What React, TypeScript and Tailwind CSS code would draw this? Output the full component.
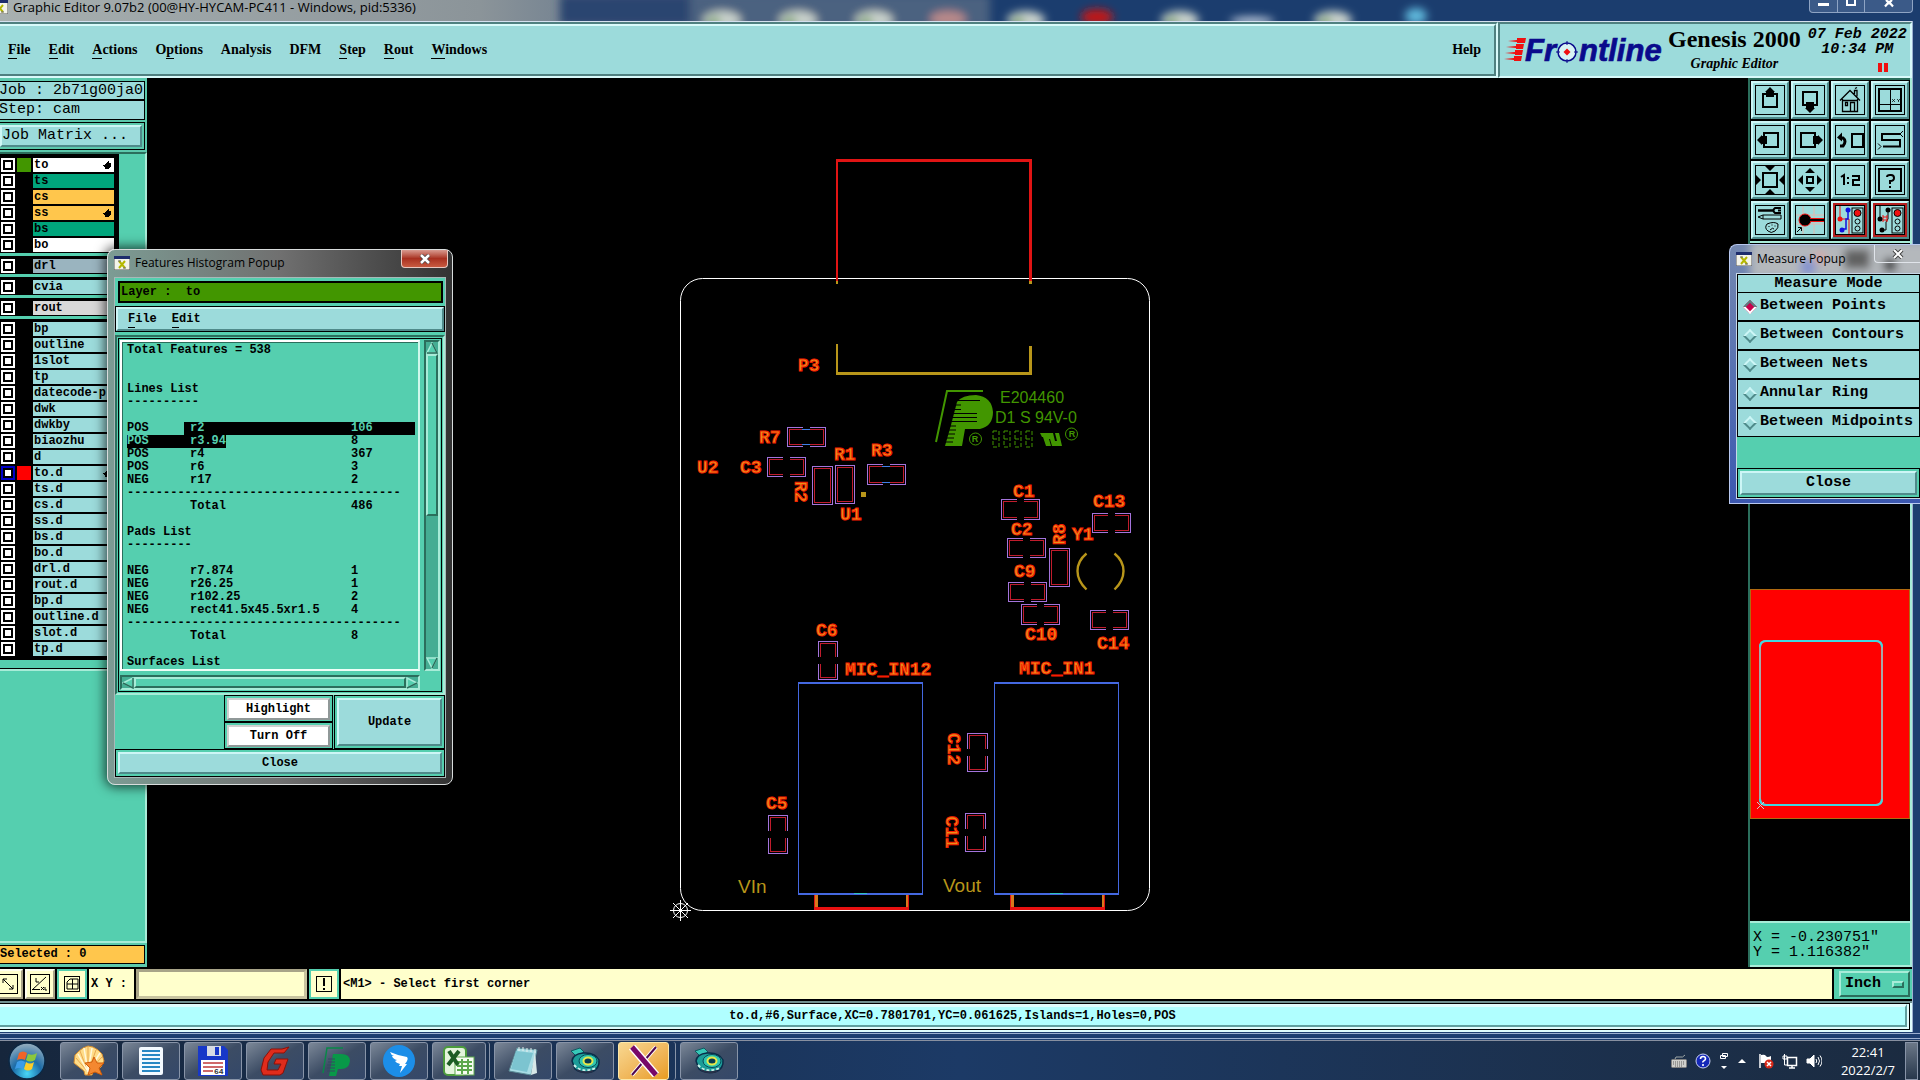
import { useState, type ReactNode } from "react";

const RAISED =
  "border-2 border-t-[#cdf6f6] border-l-[#cdf6f6] border-r-[#4f8a8a] border-b-[#4f8a8a]";
const GREEN_RAISED =
  "border-2 border-t-[#a8ecd8] border-l-[#a8ecd8] border-r-[#2b6e5c] border-b-[#2b6e5c]";
const GREEN_SUNKEN =
  "border-2 border-t-[#2b6e5c] border-l-[#2b6e5c] border-r-[#a8ecd8] border-b-[#a8ecd8]";
const MONO = "font-['Liberation_Mono',monospace]";
const SERIF = "font-['Liberation_Serif',serif]";
const SANS = "font-['Open_Sans',sans-serif]";

type Layer = { name: string; bg?: string; swatch?: string; hand?: boolean; active?: boolean };

const LAYER_GROUPS: Layer[][] = [
  [
    { name: "to", bg: "bg-white", swatch: "bg-[#429600]", hand: true },
    { name: "ts", bg: "bg-[#00a57c]" },
    { name: "cs", bg: "bg-[#ffc64c]" },
    { name: "ss", bg: "bg-[#ffc64c]", hand: true },
    { name: "bs", bg: "bg-[#00a57c]" },
    { name: "bo", bg: "bg-white" },
  ],
  [{ name: "drl", bg: "bg-[#9ab4bf]" }],
  [{ name: "cvia" }],
  [{ name: "rout", bg: "bg-[#d8d8d8]" }],
  [
    { name: "bp" },
    { name: "outline" },
    { name: "1slot" },
    { name: "tp" },
    { name: "datecode-p" },
    { name: "dwk" },
    { name: "dwkby" },
    { name: "biaozhu" },
    { name: "d" },
    { name: "to.d", swatch: "bg-[#ff0000]", hand: true, active: true },
    { name: "ts.d" },
    { name: "cs.d" },
    { name: "ss.d" },
    { name: "bs.d" },
    { name: "bo.d" },
    { name: "drl.d" },
    { name: "rout.d" },
    { name: "bp.d" },
    { name: "outline.d" },
    { name: "slot.d" },
    { name: "tp.d" },
  ],
];

// label, index of the underlined mnemonic (-1 for none)
const MENUS: [string, number][] = [
  ["File", 0],
  ["Edit", 0],
  ["Actions", 0],
  ["Options", 1],
  ["Analysis", -1],
  ["DFM", -1],
  ["Step", 0],
  ["Rout", 0],
  ["Windows", 0],
];

function MenuLabel({ text, at }: { text: string; at: number }) {
  if (at < 0) return <>{text}</>;
  return (
    <>
      {text.slice(0, at)}
      <span className="border-b border-black pb-px">{text[at]}</span>
      {text.slice(at + 1)}
    </>
  );
}

function XLogo({ className }: { className?: string }) {
  return (
    <svg viewBox="0 0 16 14" className={className} aria-hidden>
      <rect x="0" y="0" width="16" height="14" fill="#f4f4ea" stroke="#555" />
      <rect x="0" y="0" width="16" height="3" fill="#1d2c6c" />
      <path d="M5 5 L11 12 M11 5 L5 12" stroke="#b5b800" strokeWidth="2" />
      <path d="M4 5h3M9 12h3" stroke="#666" strokeWidth="1" />
    </svg>
  );
}

function TitleBar() {
  return (
    <div className="relative flex h-[21px] shrink-0 items-start justify-between overflow-hidden bg-[#1b3d6e]">
      <div className="absolute inset-0 bg-gradient-to-r from-[#a8b0b0] from-0% via-[#8b9499] via-25% to-[#1b3d6e] to-50%" />
      <svg className="absolute inset-0 h-full w-full" aria-hidden>
        <defs>
          <filter id="glass" x="-50%" y="-50%" width="200%" height="200%">
            <feGaussianBlur stdDeviation="4" />
          </filter>
        </defs>
        <g filter="url(#glass)">
          <rect x="560" y="-6" width="130" height="32" fill="#2a4470" />
          <rect x="690" y="-6" width="300" height="34" fill="#4b6280" />
          {[722, 798, 874, 1026, 1180, 1333].map((x) => (
            <g key={x}>
              <ellipse cx={x} cy="20" rx="19" ry="9" fill="#c9d2cc" />
              <ellipse cx={x - 8} cy="22" rx="7" ry="6" fill="#8fae85" />
            </g>
          ))}
          <ellipse cx="948" cy="19" rx="18" ry="8" fill="#b98a8a" />
          <ellipse cx="1097" cy="17" rx="16" ry="8" fill="#c01818" />
          <ellipse cx="1252" cy="21" rx="22" ry="4" fill="#c5d0e0" />
          <ellipse cx="1416" cy="16" rx="11" ry="8" fill="#5fb8dc" />
        </g>
      </svg>
      <div className={`relative flex items-center gap-[5px] text-[13px] leading-[14px] text-black ${SANS}`}>
        <XLogo className="-ml-2 h-[14px] w-4" />
        <h1 className="whitespace-nowrap">Graphic Editor 9.07b2 (00@HY-HYCAM-PC411 - Windows, pid:5336)</h1>
      </div>
      <div className="relative mr-[7px] flex h-[13px] overflow-hidden rounded-b border border-t-0 border-[#8ea4c4] bg-[#3b5a88]">
        <button aria-label="Minimize" className="flex w-[28px] items-start justify-center border-r border-[#8ea4c4] pt-[3px]">
          <span className="h-[3px] w-[11px] bg-white" />
        </button>
        <button aria-label="Maximize" className="flex w-[27px] items-start justify-center border-r border-[#8ea4c4]">
          <span className="h-[6px] w-[10px] border-2 border-t-0 border-white" />
        </button>
        <button aria-label="Close window" className="flex w-[47px] items-start justify-center">
          <svg viewBox="0 0 12 8" className="h-2 w-3" aria-hidden>
            <path d="M3 0 L6 3 L9 0 M2 6.500 L6 2 L10 6.500" stroke="#fff" strokeWidth="2.200" fill="none" />
          </svg>
        </button>
      </div>
    </div>
  );
}

function FrontlineLogo() {
  return (
    <svg viewBox="0 0 162 32" className="h-8 w-[162px] shrink-0 overflow-visible" role="img" aria-label="Frontline">
      <g fill="#f01010">
        <path d="M4 3 L13 2 L13 0 L22 0 L21 5 L13 5 L13 4Z" />
        <path d="M2 9 L12 8 L12 6 L20 6 L19 11 L12 11 L12 10Z" />
        <path d="M1 15 L11 14 L11 12 L19 12 L18 17 L11 17 L11 16Z" />
        <path d="M0 21 L10 20 L10 18 L18 18 L17 23 L10 23 L10 22Z" />
      </g>
      <g
        fill="#0a0a8c"
        stroke="#0a0a8c"
        strokeWidth="0.700"
        fontFamily="Liberation Sans"
        fontWeight="bold"
        fontStyle="italic"
        fontSize="31"
      >
        <text x="21" y="23">Fr</text>
        <text x="75" y="23">ntline</text>
      </g>
      <circle cx="63" cy="14" r="9" fill="#d8f4f4" stroke="#0a0a8c" strokeWidth="1.500" />
      <path d="M63 10.500L66.500 14L63 17.500L59.500 14Z" fill="#f01010" />
      <path d="M63 3v4M63 21v4M52 14h4M70 14h4" stroke="#0a0a8c" strokeWidth="1" />
    </svg>
  );
}

function Header() {
  return (
    <header className="flex h-[57px] shrink-0 border-t border-[#d5e0ee] bg-[#9cdbdb]">
      <div className="flex-1 border-2 border-l-0 border-t-[#4f8080] border-r-[#d8fafa] border-b-[#d8fafa]">
        <nav
          className={`flex h-full items-center gap-[18px] border-2 border-l-0 border-t-[#d8fafa] border-r-[#4f8080] border-b-[#4f8080] pl-2 pr-[13px] text-[14px] font-bold leading-[16px] ${SERIF}`}
        >
          {MENUS.map(([text, at]) => (
            <button key={text}>
              <MenuLabel text={text} at={at} />
            </button>
          ))}
          <button className="ml-auto">Help</button>
        </nav>
      </div>
      <div className="flex w-[414px] items-start gap-[2px] border-2 border-t-[#4f8080] border-l-[#4f8080] border-r-[#d8fafa] border-b-[#d8fafa] pl-1">
        <div className="pt-[14px]">
          <FrontlineLogo />
        </div>
        <div className={`flex flex-col items-center font-bold ${SERIF}`}>
          <span className="whitespace-nowrap text-[24px] leading-[30px]">Genesis 2000</span>
          <span className="text-[14px] italic leading-[20px]">Graphic Editor</span>
        </div>
        <div className={`flex flex-1 flex-col items-center pt-[3px] pl-[2px] text-[15px] italic leading-[15px] ${MONO}`}>
          <span className="whitespace-nowrap font-bold">07 Feb 2022</span>
          <span className="font-bold">10:34 PM</span>
          <span className="mt-[6px] mr-[22px] flex gap-[2px] self-end">
            <i className="h-[9px] w-1 bg-[#f01010]" />
            <i className="h-[9px] w-1 bg-[#f01010]" />
          </span>
        </div>
      </div>
    </header>
  );
}

function Hand() {
  return (
    <svg viewBox="0 0 9 8" className="h-2 w-[9px]" aria-hidden>
      <path d="M5 0h1v2h2v4h-1v1h-1v1h-4v-2h-1v-1h-1v-1h2v-1h1v-1h1v-1h1z" fill="#000" />
    </svg>
  );
}

function LayerRow({ layer }: { layer: Layer }) {
  return (
    <div className="flex h-4 items-center">
      <input
        type="checkbox"
        aria-label={`Affect layer ${layer.name}`}
        className={`ml-px h-[14px] w-[14px] shrink-0 appearance-none border-2 bg-white ${
          layer.active ? "border-[#0000c8]" : "border-white"
        } shadow-[inset_0_0_0_2px_#000]`}
      />
      <span className={`mx-[2px] h-[14px] w-[14px] shrink-0 ${layer.swatch ?? "bg-black"}`} />
      <button className={`flex h-[14px] flex-1 items-center justify-between pl-px pr-[2px] leading-[14px] ${layer.bg ?? "bg-[#9cdbdb]"}`}>
        {layer.name}
        {layer.hand && <Hand />}
      </button>
    </div>
  );
}

function Sidebar() {
  return (
    <aside className={`flex w-[147px] shrink-0 flex-col bg-[#5cc9ad] text-[12px] font-bold ${MONO}`}>
      <div className="mt-[3px] mr-[2px] border border-l-0 border-black text-[15px] font-normal">
        <div className="h-[19px] overflow-hidden whitespace-nowrap border-b-2 border-black bg-[#9cdbdb] leading-[17px] -indent-px">
          Job : 2b71g00ja0
        </div>
        <div className="bg-[#9cdbdb] leading-[18px] -indent-px">Step: cam</div>
      </div>
      <div className="mt-[2px] mr-[2px] border border-l-0 border-black pt-[2px] pr-[2px] pb-[2px] text-[15px] font-normal">
        <button className={`block w-full bg-[#9cdbdb] text-left leading-[18px] ${RAISED}`}>Job Matrix ...</button>
      </div>
      <div className="mt-[2px] flex min-h-0 flex-1 flex-col border-t-2 border-[#2b6e5c] border-r-2 border-r-[#a8ecd8] bg-[#55cfaf]">
        <div className="w-[119px] border-b-2 border-r-2 border-t border-black bg-black pb-px pr-[3px]">
          {LAYER_GROUPS.map((group, i) => (
            <div key={i} className={i > 0 ? "border-t-[3px] border-[#55cfaf] pt-[2px]" : "pt-[2px]"}>
              {group.map((layer) => (
                <LayerRow key={layer.name} layer={layer} />
              ))}
            </div>
          ))}
        </div>
        <div className="mt-2 border-t border-black">
          <div className="h-[2px] bg-[#a8ecd8]" />
        </div>
      </div>
      <div className="border-t-2 border-[#a8ecd8] pt-[2px] pr-[2px] pb-[3px]">
        <div className="border border-l-0 border-black bg-[#ffc64c] leading-[17px]">Selected : 0</div>
      </div>
    </aside>
  );
}

type Pad = [x: number, y: number, w: number, h: number, gap: "x" | "y" | "none" | "tick"];

const PADS: Pad[] = [
  [787, 427, 38, 19, "tick"],
  [767, 457, 38, 19, "x"],
  [867, 464, 38, 20, "tick"],
  [812, 466, 20, 38, "none"],
  [835, 465, 19, 38, "none"],
  [1001, 499, 38, 20, "x"],
  [1007, 538, 38, 19, "x"],
  [1092, 513, 38, 19, "x"],
  [1049, 548, 20, 38, "none"],
  [1008, 582, 38, 19, "x"],
  [1021, 604, 38, 20, "x"],
  [1090, 610, 38, 19, "x"],
  [818, 641, 19, 38, "y"],
  [967, 733, 20, 38, "y"],
  [965, 813, 20, 38, "y"],
  [768, 815, 19, 38, "y"],
];

const LABELS: [text: string, x: number, y: number, rot?: number][] = [
  ["P3", 798, 371],
  ["R7", 759, 443],
  ["C3", 740, 473],
  ["U2", 697, 473],
  ["R1", 834, 460],
  ["R3", 871, 456],
  ["R2", 795, 481, 90],
  ["U1", 840, 520],
  ["C1", 1013, 497],
  ["C2", 1011, 535],
  ["C9", 1014, 577],
  ["C13", 1093, 507],
  ["Y1", 1072, 540],
  ["R8", 1065, 545, -90],
  ["C10", 1025, 640],
  ["C14", 1097, 649],
  ["C6", 816, 636],
  ["MIC_IN12", 845, 675],
  ["MIC_IN1", 1019, 674],
  ["C12", 948, 733, 90],
  ["C11", 946, 816, 90],
  ["C5", 766, 809],
];

function PadShape({ pad: [x, y, w, h, gap] }: { pad: Pad }) {
  const cx = x + w / 2;
  const cy = y + h / 2;
  return (
    <g fill="none" shapeRendering="crispEdges">
      <rect x={x + 0.5} y={y + 0.5} width={w} height={h} stroke="#a474dc" />
      <rect x={x + 2.5} y={y + 2.5} width={w - 4} height={h - 4} stroke="#c01c2c" />
      {(gap === "x" || gap === "tick") && <path d={`M${cx} ${y - 1}V${y + h + 2}`} stroke="#000" strokeWidth="7" />}
      {gap === "y" && <path d={`M${x - 1} ${cy}H${x + w + 2}`} stroke="#000" strokeWidth="7" />}
      {gap === "tick" && <path d={`M${cx - 4} ${y + 2.5}h8M${cx - 4} ${y + h - 1.5}h8`} stroke="#3f7fe8" />}
    </g>
  );
}

function Board() {
  return (
    <svg viewBox="147 78 1601 889" className="h-full w-full" role="img" aria-label="PCB layout">
      <g fill="none" strokeWidth="1" stroke="#fff">
        <rect x="680.500" y="278.500" width="469" height="632" rx="22" />
        <circle cx="680.500" cy="910.500" r="7" />
        <path d="M670 910.500h21M680.500 900v21M673 903l15 15M688 903l-15 15" />
      </g>

      <g fill="none" shapeRendering="crispEdges">
        <path d="M837 281V160" stroke="#e01414" strokeWidth="2" />
        <path d="M836 160.500H1032M1030.500 281V160" stroke="#e01414" strokeWidth="3" />
        <path d="M836 282.500h2M1029 282.500h3" stroke="#b8961a" strokeWidth="3" />
        <path d="M837 344V373" stroke="#b8961a" strokeWidth="2" />
        <path d="M836 373.500H1032M1030.500 346V374" stroke="#b8961a" strokeWidth="3" />
        <rect x="861" y="492" width="5" height="5" fill="#b8961a" />
      </g>
      <g fill="none" stroke="#b8961a" strokeWidth="2.400">
        <path d="M1086.500 553.500Q1077.500 561 1077.500 571T1086.500 589.500" />
        <path d="M1114.500 553.500Q1123.500 561 1123.500 571T1114.500 589.500" />
      </g>

      {[798, 994].map((x) => (
        <g key={x} fill="none" shapeRendering="crispEdges">
          <rect x={x + 0.5} y="682.500" width="124" height="211" stroke="#4468e0" />
          <path d={`M${x} 683h125M${x} 894h125`} stroke="#4468e0" strokeWidth="2" />
          <path d={`M${x + 56} 893.500h13`} stroke="#30c0c0" />
          <path d={`M${x + 18} 895v13M${x + 109} 895v13`} stroke="#d8781c" strokeWidth="3" />
          <path d={`M${x + 16.5} 895v13M${x + 110.500} 895v13`} stroke="#e01414" />
          <path d={`M${x + 16} 908.500h95`} stroke="#e81010" strokeWidth="3" />
        </g>
      ))}

      {PADS.map((pad) => (
        <PadShape key={`${pad[0]}-${pad[1]}`} pad={pad} />
      ))}

      <g
        fontFamily="Liberation Mono"
        fontWeight="bold"
        fontSize="18"
        fill="#e89018"
        stroke="#f81c00"
        strokeWidth="1"
      >
        {LABELS.map(([text, x, y, rot]) => (
          <text key={text} x={x} y={y} transform={rot ? `rotate(${rot} ${x} ${y})` : undefined}>
            {text}
          </text>
        ))}
      </g>

      <g fontFamily="Liberation Sans" fontSize="19" fill="#b8961a">
        <text x="738" y="893">VIn</text>
        <text x="943" y="892">Vout</text>
      </g>

      {/* UL marking */}
      <g fill="#429600">
        <path d="M936 442L947 391H983" fill="none" stroke="#429600" strokeWidth="2" />
        <path d="M945 446H962L965 429H980Q993 426 993 412Q992 397 976 395Q962 395 957 402L951 425Z" />
        <path
          d="M958 400.500h22M955 405h6M953 409.500h8M953 413.500h24M952 417.500h25M951 421.500h26M949 426h7M948 430h8M947 434h8M946 438h8M945 442h8"
          stroke="#000"
          strokeWidth="1"
        />
        <g fontFamily="Liberation Sans" fontSize="16">
          <text x="1000" y="403">E204460</text>
          <text x="995" y="423">D1 S 94V-0</text>
        </g>
        <g fontFamily="Liberation Sans" fontSize="9" fontWeight="bold" textAnchor="middle">
          <text x="975" y="442">R</text>
          <text x="1072" y="437">R</text>
        </g>
        <g fill="none" stroke="#429600">
          <circle cx="975.500" cy="439" r="6" />
          <circle cx="1071.500" cy="434" r="6" />
          <g strokeDasharray="4 2">
            {[992, 1003, 1014, 1025].map((x) => (
              <path key={x} d={`M${x + 1} 431h6v16h-6zM${x + 1} 439h6`} />
            ))}
          </g>
        </g>
        <path d="M1040 433h13l2 8 2 0-2-8h4l3 13h-10l-2-7-1 0 2 7h-5l-3-9h-1z" />
      </g>
    </svg>
  );
}

const TOOLS: { name: string; alert?: boolean; art: ReactNode }[] = [
  {
    name: "Pan up",
    art: (
      <>
        <rect x="8" y="9" width="14" height="13" strokeWidth="2" />
        <path d="M15 2l5 5h-1v5h-8v-5h-1z" fill="#000" stroke="none" />
      </>
    ),
  },
  {
    name: "Pan down",
    art: (
      <>
        <rect x="8" y="7" width="14" height="13" strokeWidth="2" />
        <path d="M15 28l5-5h-1v-6h-8v6h-1z" fill="#000" stroke="none" />
      </>
    ),
  },
  {
    name: "Home",
    art: (
      <path
        d="M5 15.500L15 5.500L25 15.500M7.500 14v12.500h15V14M7 15.500h16M10.500 17.500h2v3h-2zM15.500 26v-8.500h4v8.500M19.500 9V5.500h2.500v6M20 3.500l2-1"
        strokeWidth="1.300"
      />
    ),
  },
  {
    name: "Pan window",
    art: (
      <>
        <rect x="4" y="4" width="22" height="22" strokeWidth="2" />
        <path d="M15.500 4v22M4 19.500h22" />
        <path d="M17 14l3 3M20 14l-3 3M22 14l1.500 1.500L25 14M23.500 15v2" strokeWidth="0.700" />
      </>
    ),
  },
  {
    name: "Pan left",
    art: (
      <>
        <rect x="9" y="8" width="14" height="14" strokeWidth="2" />
        <path d="M2 15l5-5v1h5v8h-5v1z" fill="#000" stroke="none" />
      </>
    ),
  },
  {
    name: "Pan right",
    art: (
      <>
        <rect x="6" y="8" width="14" height="14" strokeWidth="2" />
        <path d="M28 15l-5-5v1h-5v8h5v1z" fill="#000" stroke="none" />
      </>
    ),
  },
  {
    name: "Previous view",
    art: (
      <>
        <rect x="17" y="9" width="11" height="13" strokeWidth="2" />
        <path d="M5 13h3q4 3 0 8h-3" strokeWidth="3" />
        <path d="M2 12.500l5-5v9z" fill="#000" stroke="none" />
      </>
    ),
  },
  {
    name: "Net path",
    art: (
      <>
        <path d="M25 9H7v6h18v6.500H8" strokeWidth="2" />
        <path d="M25 9l3-3M25 9l3 3M6 21.500l-3-3M6 21.500l-3 3" />
      </>
    ),
  },
  {
    name: "Zoom in",
    art: (
      <>
        <rect x="8" y="8" width="14" height="14" strokeWidth="2" />
        <path d="M10 1h10l-5 5zM10 29h10l-5-5zM1 10v10l5-5zM29 10v10l-5-5z" fill="#000" stroke="none" />
      </>
    ),
  },
  {
    name: "Zoom out",
    art: (
      <>
        <rect x="12" y="12" width="6" height="6" strokeWidth="2" />
        <path d="M10 8h10l-5-5zM10 22h10l-5 5zM8 10v10l-5-5zM22 10v10l5-5z" fill="#000" stroke="none" />
      </>
    ),
  },
  {
    name: "Zoom ratio",
    art: (
      <>
        <path d="M6 12l3-2v10M17 11h7v4h-6v5h7" strokeWidth="2" />
        <path d="M12 12h2v2h-2zM12 17h2v2h-2z" fill="#000" stroke="none" />
      </>
    ),
  },
  {
    name: "Query",
    art: (
      <>
        <rect x="4" y="4" width="22" height="22" strokeWidth="2" />
        <path d="M12 12q0-2 3-2h1q3 0 3 3t-4 3v3M15 21v2" strokeWidth="2" />
      </>
    ),
  },
  {
    name: "Setup tools",
    art: (
      <>
        <path d="M3 5.500h16" strokeWidth="2.500" />
        <path d="M26 3h-6q-3 2.500 0 5h6M23 5.500h3" strokeWidth="2" />
        <path d="M3 12l5-2h18v4H8zM8 10v4" />
        <path d="M12 19q7-3 11 0q1 4-3 7q-4 3-7 0q-4-3-1-7zM14 21v1M17 19.500v1M20 20.500v1M15 25q3-3 4-1" />
      </>
    ),
  },
  {
    name: "Highlight net",
    art: (
      <>
        <path d="M8 1v28M19 1v28M1 10h28M1 19h28" stroke="#e0b8b0" />
        <circle cx="10" cy="15" r="6" fill="#000" stroke="#f01010" strokeWidth="1" />
        <path d="M16 15h13" stroke="#f01010" strokeWidth="4" />
        <path d="M15 15h14" strokeWidth="2" />
        <path d="M2 27l4-4M3 22.500h3.500v3.500" />
      </>
    ),
  },
  {
    name: "Connectivity",
    alert: true,
    art: (
      <>
        <path d="M5 1v13h9v15" stroke="#f01010" />
        <path d="M13 5v9h-2v10h-4" stroke="#1010e0" strokeWidth="1.500" />
        <circle cx="13" cy="5" r="2.500" fill="#1010e0" stroke="none" />
        <circle cx="5" cy="14" r="2.500" fill="#f01010" stroke="none" />
        <circle cx="7" cy="25" r="2.500" fill="#1010e0" stroke="none" />
        <rect x="17" y="3" width="11" height="25" />
        <circle cx="22.500" cy="8" r="3.500" fill="#f01010" />
        <circle cx="22.500" cy="16.500" r="2.500" />
        <circle cx="22.500" cy="23.500" r="2.500" />
      </>
    ),
  },
  {
    name: "Spacing check",
    alert: true,
    art: (
      <>
        <path d="M5 1v13M13 5v9l-2 3v8h-4" />
        <path d="M8 12h4M8 15h4M8 10v7M12 10v7" stroke="#f01010" />
        <circle cx="13" cy="5" r="2.500" fill="#000" stroke="none" />
        <circle cx="5" cy="14" r="2.500" fill="#000" stroke="none" />
        <circle cx="7" cy="25" r="2.500" fill="#000" stroke="none" />
        <rect x="17" y="3" width="11" height="25" />
        <circle cx="22.500" cy="8" r="3.500" fill="#f01010" />
        <circle cx="22.500" cy="16.500" r="2.500" />
        <circle cx="22.500" cy="23.500" r="2.500" />
      </>
    ),
  },
];

function RightPanel() {
  return (
    <aside className="flex w-[164px] shrink-0 flex-col border-l-2 border-[#2b6e5c] border-r-2 border-r-[#a8ecd8] bg-black">
      <div className="grid grid-cols-4 gap-[2px] border-t-2 border-[#2b6e5c] border-b-2 border-b-[#a8ecd8] bg-black p-px pb-[2px]">
        {TOOLS.map((t) => (
          <button
            key={t.name}
            aria-label={t.name}
            className={`flex h-[38px] items-center justify-center ${RAISED} ${t.alert ? "bg-[#b42020]" : "bg-[#9cdbdb]"}`}
          >
            <svg viewBox="0 0 30 30" className="h-[30px] w-[30px]" fill="none" stroke="#000">
              <rect x="0.500" y="0.500" width="29" height="29" fill="#9cdbdb" />
              {t.art}
            </svg>
          </button>
        ))}
      </div>
      <div className="flex flex-1 flex-col justify-end pb-[102px]">
        <svg viewBox="0 0 160 230" className="w-full" role="img" aria-label="Board overview">
          <rect x="0.500" y="0.500" width="159" height="229" fill="#ff0000" stroke="#b06a10" />
          <rect x="10" y="52" width="122" height="164" rx="6" fill="none" stroke="#a8a8a8" strokeWidth="2" />
          <path
            d="M10 58q0-6 6-6h110q6 0 6 6M10 210q0 6 6 6h110q6 0 6-6"
            fill="none"
            stroke="#40d8e0"
            strokeWidth="2"
          />
          <path d="M7 213l7 7M14 213l-7 7" stroke="#c8d0d0" />
        </svg>
      </div>
      <div
        className={`border-t-2 border-[#a8ecd8] border-b-2 border-b-[#a8ecd8] bg-[#55cfaf] pt-[7px] pb-[5px] pl-[3px] text-[15px] leading-[15px] ${MONO}`}
      >
        <p>X = -0.230751"</p>
        <p>Y = 1.116382"</p>
      </div>
    </aside>
  );
}

function CommandBar() {
  const yellowBtn =
    "flex h-[30px] w-[30px] items-center justify-center border-2 border-t-[#fffff0] border-l-[#fffff0] border-r-[#a8a488] border-b-[#a8a488] bg-[#ffffcc]";
  return (
    <div className={`flex h-[34px] shrink-0 items-center gap-[2px] border-y-[2px] border-black bg-black text-[12px] font-bold ${MONO}`}>
      <button aria-label="Snap off" className={`${yellowBtn} -ml-[7px]`}>
        <svg viewBox="0 0 22 22" className="size-[22px]" fill="none" stroke="#000" aria-hidden>
          <rect x="1.500" y="1.500" width="19" height="19" />
          <path d="M6 6l10 10M6 10V6h4M12 16h4v-4" />
        </svg>
      </button>
      <button aria-label="Angle" className={yellowBtn}>
        <svg viewBox="0 0 22 22" className="size-[22px]" fill="none" stroke="#000" aria-hidden>
          <rect x="1.500" y="1.500" width="19" height="19" />
          <path d="M3 17L17 4M3 16.500h8M7 5v4h3M12 14l3 3M12 17l3-3M16 14v3h2" />
        </svg>
      </button>
      <button aria-label="Grid" className={`${yellowBtn} outline-2 -outline-offset-2 outline-[#55cfaf]`}>
        <svg viewBox="0 0 22 22" className="size-[22px]" fill="none" stroke="#000" aria-hidden>
          <rect x="3.500" y="3.500" width="15" height="15" />
          <path d="M6 16V9l3-3h8v10zM11.500 6v10M6 11h11" />
        </svg>
      </button>
      <label htmlFor="xy" className="flex h-[30px] w-[45px] items-center bg-[#ffffcc] pl-[2px] whitespace-nowrap">
        X Y :
      </label>
      <input
        id="xy"
        className="h-[30px] w-[171px] border-3 border-t-[#a8a488] border-l-[#a8a488] border-r-[#c8c4a0] border-b-[#c8c4a0] bg-[#ffffcc] px-1 outline-none"
      />
      <button aria-label="Alert" className={`${yellowBtn} outline-2 -outline-offset-2 outline-[#55cfaf]`}>
        <svg viewBox="0 0 22 22" className="size-[22px]" fill="none" stroke="#000" aria-hidden>
          <rect x="3.500" y="3.500" width="15" height="15" />
          <path d="M11 5v8M11 15v2" strokeWidth="2" />
        </svg>
      </button>
      <p className="flex h-[30px] flex-1 items-center bg-[#ffffcc] pl-[2px]">&lt;M1&gt; - Select first corner</p>
      <div className="flex h-[30px] w-[78px] items-center bg-[#55cfaf] pl-[5px] pr-[2px]">
        <div className={`relative w-full ${GREEN_RAISED}`}>
          <select aria-label="Units" className="w-full appearance-none bg-transparent pl-1 text-[15px] leading-[22px] font-bold outline-none">
            <option>Inch</option>
            <option>MM</option>
          </select>
          <span className={`pointer-events-none absolute top-2 right-1 h-[7px] w-3 ${GREEN_RAISED}`} />
        </div>
      </div>
    </div>
  );
}

function StatusBar() {
  return (
    <div className="shrink-0 border-t-2 border-[#6f8f8f] bg-[#dffdfd] pr-[2px] pb-[2px]">
      <div className="border border-l-0 border-black pr-[2px] pb-[2px]">
        <p
          className={`border-t-[3px] border-r-2 border-b-2 border-t-[#dffdfd] border-r-[#5f9f9f] border-b-[#5f9f9f] bg-[#b0ffff] text-center text-[12px] font-bold leading-[18px] ${MONO}`}
        >
          to.d,#6,Surface,XC=0.7801701,YC=0.061625,Islands=1,Holes=0,POS
        </p>
      </div>
    </div>
  );
}

type Feature = [kind: string, symbol: string, count: number];

const LINES: Feature[] = [
  ["POS", "r2", 106],
  ["POS", "r3.94", 8],
  ["POS", "r4", 367],
  ["POS", "r6", 3],
  ["NEG", "r17", 2],
];
const PAD_FEATURES: Feature[] = [
  ["NEG", "r7.874", 1],
  ["NEG", "r26.25", 1],
  ["NEG", "r102.25", 2],
  ["NEG", "rect41.5x45.5xr1.5", 4],
];
const RULE = "--------------------------------------";

function FeatureTable({ title, rows, total }: { title: string; rows: Feature[]; total: number }) {
  return (
    <table className="mb-[13px] w-[288px] table-fixed border-collapse text-left">
      <caption className="mb-[13px] text-left">
        {title}
        <br />
        {"-".repeat(title.length)}
      </caption>
      <colgroup>
        <col className="w-[57px]" />
        <col className="w-[167px]" />
        <col />
      </colgroup>
      <tbody>
        {rows.map(([kind, symbol, count]) => {
          const full = symbol === "r2";
          const part = symbol === "r3.94";
          const inv = "bg-black text-[#55cfaf]";
          return (
            <tr key={symbol}>
              <td className={part ? inv : ""}>{kind}</td>
              <td className={full ? `pl-[6px] ${inv}` : part ? "" : "pl-[6px]"}>
                {part ? <span className={`inline-block h-[13px] pl-[6px] align-top ${inv}`}>{symbol}</span> : symbol}
              </td>
              <td className={full ? inv : ""}>{count}</td>
            </tr>
          );
        })}
      </tbody>
      <tfoot>
        <tr>
          <td colSpan={3}>{RULE}</td>
        </tr>
        <tr>
          <td />
          <td className="pl-[6px]">Total</td>
          <td>{total}</td>
        </tr>
      </tfoot>
    </table>
  );
}

function Arrow({ dir }: { dir: "up" | "down" | "left" | "right" }) {
  const shapes = {
    up: ["M6 1L11 11H1Z", "M6 1L11 11H1"],
    down: ["M1 1H11L6 11Z", "M11 1L6 11"],
    left: ["M1 6L11 1V11Z", "M11 1V11L1 6"],
    right: ["M1 1L11 6L1 11Z", "M11 6L1 11"],
  };
  const [fill, shade] = shapes[dir];
  return (
    <svg viewBox="0 0 12 12" className="size-3 shrink-0" aria-hidden>
      <path d={fill} fill="#55cfaf" stroke="#a8ecd8" strokeWidth="1.500" />
      <path d={shade} fill="none" stroke="#2b6e5c" strokeWidth="1.500" />
    </svg>
  );
}

function HistogramPopup() {
  const [lit, setLit] = useState(false);
  const whiteBtn =
    "w-full border-2 border-t-[#d0d0d0] border-l-[#d0d0d0] border-r-[#909898] border-b-[#909898] bg-white leading-[18px]";
  return (
    <section
      aria-label="Features Histogram Popup"
      className="absolute top-[249px] left-[107px] flex w-[346px] flex-col rounded-lg border border-[#d8dcdc] bg-gradient-to-r from-[#7c9c94] from-0% via-[#707070] via-50% to-[#333] to-100% px-[6px] pb-[6px] shadow-[0_0_12px_2px_rgba(0,0,0,0.700)]"
    >
      <div className="flex h-[27px] items-start">
        <div className={`flex items-center gap-[5px] pt-1 text-[12px] leading-[18px] ${SANS}`}>
          <XLogo className="h-[14px] w-4" />
          <h2 className="text-black">Features Histogram Popup</h2>
        </div>
        <button
          aria-label="Close popup"
          className="-mr-[2px] ml-auto flex h-[18px] w-[47px] items-center justify-center rounded-b border border-t-0 border-[#e8c8c0] bg-gradient-to-b from-[#d89a90] via-[#a83020] to-[#c85a40]"
        >
          <svg viewBox="0 0 12 10" className="h-[10px] w-3" aria-hidden>
            <path d="M2 1L10 9M10 1L2 9" stroke="#444" strokeWidth="4" />
            <path d="M2 1L10 9M10 1L2 9" stroke="#fff" strokeWidth="2.500" />
          </svg>
        </button>
      </div>
      <div className={`border border-[#a8b8b8] bg-[#55cfaf] text-[12px] font-bold ${MONO}`}>
        <div className="mr-[2px] ml-[3px] mt-[3px] border-2 border-black bg-[#429600] pl-px leading-[18px] whitespace-pre">Layer :  to</div>
        <div className="mt-[3px] border border-black">
          <div className={`flex items-center gap-[15px] bg-[#9cdbdb] py-[2px] pl-[10px] ${RAISED}`}>
            <button className="leading-[16px]"><MenuLabel text="File" at={0} /></button>
            <button className="leading-[16px]"><MenuLabel text="Edit" at={0} /></button>
          </div>
        </div>
        <div className={`mt-[3px] p-px ${GREEN_SUNKEN}`}>
          <div className="border border-black p-px">
            <div className="flex gap-[4px]">
              <div className="h-[331px] flex-1 overflow-hidden border-2 border-t-white border-l-white border-r-[#d0f8ec] border-b-[#f0fff8] bg-[#55cfaf]">
                <div className="h-full border-t border-l border-[#2b6e5c] pt-px pl-1 leading-[13px] whitespace-nowrap [&_td]:py-0 [&_td]:leading-[13px]">
                  <p className="mb-[26px]">Total Features = 538</p>
                  <FeatureTable title="Lines List" rows={LINES} total={486} />
                  <FeatureTable title="Pads List" rows={PAD_FEATURES} total={8} />
                  <p>Surfaces List</p>
                </div>
              </div>
              <div className={`flex w-4 flex-col items-center bg-[#45ad93] ${GREEN_SUNKEN}`}>
                <Arrow dir="up" />
                <div className={`h-[162px] w-full bg-[#55cfaf] ${GREEN_RAISED}`} />
                <div className="flex-1" />
                <Arrow dir="down" />
              </div>
            </div>
            <div className={`mt-[4px] mr-5 flex h-[15px] items-center bg-[#45ad93] ${GREEN_SUNKEN}`}>
              <Arrow dir="left" />
              <div className={`h-full flex-1 bg-[#55cfaf] ${GREEN_RAISED}`} />
              <Arrow dir="right" />
            </div>
          </div>
        </div>
        <div className="flex h-[54px] gap-px">
          <div className="flex-1" />
          <div className="flex w-[109px] flex-col border border-black">
            <div className="flex flex-1 items-center border-b-2 border-black px-[2px]">
              <button className={whiteBtn} aria-pressed={lit} onClick={() => setLit(true)}>Highlight</button>
            </div>
            <div className="flex flex-1 items-center px-[2px]">
              <button className={whiteBtn} onClick={() => setLit(false)}>Turn Off</button>
            </div>
          </div>
          <div className="flex w-[111px] border border-black p-[2px]">
            <button className={`flex-1 bg-[#9cdbdb] ${RAISED}`}>Update</button>
          </div>
        </div>
        <div className="border border-black p-[2px]">
          <button className={`block w-full bg-[#9cdbdb] leading-[18px] ${RAISED}`}>Close</button>
        </div>
      </div>
    </section>
  );
}

const MODES = ["Between Points", "Between Contours", "Between Nets", "Annular Ring", "Between Midpoints"];

function MeasurePopup() {
  const [mode, setMode] = useState(MODES[0]);
  return (
    <section
      aria-label="Measure Popup"
      className="absolute top-[244px] right-0 w-[191px] rounded-tl-lg border border-r-0 border-[#b8c8f0] bg-gradient-to-b from-[#7488b0] to-[#3c58b0] pb-1 pl-[6px]"
    >
      <div className="relative flex h-7 items-start overflow-hidden">
        <svg className="absolute inset-0 h-full w-full" aria-hidden>
          <g filter="url(#glass)">
            <rect x="14" y="-4" width="180" height="38" fill="#b4b8bc" />
            <rect x="108" y="4" width="26" height="20" fill="#606060" />
            <circle cx="72" cy="22" r="8" fill="#8090d0" />
            <circle cx="154" cy="20" r="7" fill="#303030" />
            <circle cx="84" cy="12" r="6" fill="#d8a8a8" />
          </g>
        </svg>
        <div className={`relative flex items-center gap-[5px] pt-[5px] text-[12px] leading-[18px] ${SANS}`}>
          <XLogo className="h-[14px] w-4" />
          <h2>Measure Popup</h2>
        </div>
        <button
          aria-label="Close measure popup"
          className="relative ml-auto flex h-[18px] w-[46px] items-center justify-center rounded-bl border border-t-0 border-r-0 border-[#e0e4ea]"
        >
          <svg viewBox="0 0 12 10" className="h-[10px] w-3" aria-hidden>
            <path d="M2 1L10 9M10 1L2 9" stroke="#444" strokeWidth="4" />
            <path d="M2 1L10 9M10 1L2 9" stroke="#fff" strokeWidth="2" />
          </svg>
        </button>
      </div>
      <div className={`border border-r-0 border-[#c8d8e8] bg-[#55cfaf] text-[15px] font-bold ${MONO}`}>
        <fieldset aria-labelledby="mode-title" className="border border-black bg-black">
          <p id="mode-title" className="mb-px bg-[#9cdbdb] text-center leading-[17px]">Measure Mode</p>
          <div className="flex flex-col gap-[2px]">
            {MODES.map((m) => (
              <label key={m} className="flex h-[27px] items-center gap-[5px] bg-[#9cdbdb] pl-[7px] whitespace-nowrap">
                <input
                  type="radio"
                  name="mode"
                  checked={mode === m}
                  onChange={() => setMode(m)}
                  className="size-[10px] shrink-0 rotate-45 appearance-none border-2 border-t-[#cdf6f6] border-l-[#cdf6f6] border-r-[#4f8a8a] border-b-[#4f8a8a] checked:border-t-[#5a7f80] checked:border-l-[#5a7f80] checked:border-r-white checked:border-b-white checked:bg-[#c8004c]"
                />
                {m}
              </label>
            ))}
          </div>
        </fieldset>
        <div className="mt-[31px] border border-black p-[2px]">
          <button className={`block w-full bg-[#9cdbdb] leading-[20px] ${RAISED}`}>Close</button>
        </div>
      </div>
    </section>
  );
}

function Lens() {
  return (
    <svg viewBox="0 0 32 32" className="size-8" aria-hidden>
      <path d="M2 6l9-3 4 4-7 5z" fill="#38c8b8" stroke="#105860" />
      <path d="M3 16Q4 9 14 8Q26 7 30 15Q31 24 22 27Q12 29 6 24Z" fill="#1c9c98" stroke="#0a2c48" strokeWidth="1.500" />
      <ellipse cx="19" cy="16" rx="9" ry="6.500" fill="#30c8b0" stroke="#084858" />
      <ellipse cx="19" cy="16" rx="4.500" ry="3.500" fill="#083c50" stroke="#e8e848" strokeWidth="2" />
      <path d="M5 20q8 9 22 3" stroke="#c8f0e8" fill="none" strokeWidth="2" strokeDasharray="3 2" />
      <path d="M8 25q7 4 16 1" stroke="#283048" fill="none" strokeWidth="2" />
    </svg>
  );
}

const APPS: { name: string; hot?: boolean; stack?: boolean; art: ReactNode }[] = [
  {
    name: "Shell",
    art: (
      <svg viewBox="0 0 32 32" className="size-8" aria-hidden>
        <path d="M1 18L2 10L6 6L10 3L15 1L20 2L25 5L29 9L31 16L28 22L20 27L19 30H12L11 26Z" fill="#ffdc88" stroke="#d89030" />
        <path d="M15 27L3 13M15 27L7 6M15 27L15 2M15 27L23 5M15 27L29 12" stroke="#e8a850" />
        <path d="M15 27L5 9M15 27L11 3M15 27L19 3M15 27L27 8" stroke="#fff8dc" strokeWidth="1.500" />
        <path d="M21 12l3 6 7 0-5 5 3 7-7-3-7 3 2-7-5-5 7-1z" fill="#f48830" stroke="#d05c08" />
      </svg>
    ),
  },
  {
    name: "Documents",
    art: (
      <svg viewBox="0 0 32 32" className="size-8" aria-hidden>
        <rect x="4" y="2" width="24" height="28" rx="2" fill="#f4faff" />
        <path d="M7 6h18M7 10h18M7 14h18M7 18h18M7 22h18M7 26h18" stroke="#2888c4" strokeWidth="2" />
      </svg>
    ),
  },
  {
    name: "Total Commander",
    art: (
      <svg viewBox="0 0 32 32" className="size-8" aria-hidden>
        <path d="M1 1h26l4 4v26H1z" fill="#1838c8" />
        <rect x="10" y="1" width="14" height="10" fill="#d8dce4" />
        <rect x="18" y="2" width="4" height="8" fill="#1838c8" />
        <rect x="4" y="15" width="24" height="15" fill="#fff" />
        <path d="M6 18h20M6 22h20M6 26h10" stroke="#c03838" strokeWidth="1.500" />
        <text x="17" y="29" fontSize="8" fontFamily="Liberation Mono" fontWeight="bold" fill="#333">64</text>
      </svg>
    ),
  },
  {
    name: "Genesis",
    art: (
      <svg viewBox="0 0 32 32" className="size-8" aria-hidden>
        <path d="M30 2L25 8H15L9 17L8 25H19L22 19H15L17 14H29L24 28L21 30H4L2 25L5 13L12 4H23Z" fill="#e02c1c" stroke="#8c1008" />
      </svg>
    ),
  },
  {
    name: "Panel",
    art: (
      <svg viewBox="0 0 32 32" className="size-8" aria-hidden>
        <path d="M2 28L6 3H22" fill="none" stroke="#088848" strokeWidth="1.500" />
        <path d="M8 31L12 9H20Q29 9 29 16Q28 24 20 24H17L15 31Z" fill="#089848" />
        <path d="M7 14h7M7 17h7M6 20h8M6 23h8M6 26h8" stroke="#344860" />
      </svg>
    ),
  },
  {
    name: "DingTalk",
    art: (
      <svg viewBox="0 0 32 32" className="size-8" aria-hidden>
        <circle cx="16" cy="16" r="16" fill="#1c8ee8" />
        <path d="M7 7Q16 11 24 12Q26 14 22 19H24L17 28L19 21H16L17 19Q13 18 12 16L14 15Q10 14 9 11L11 11Q8 10 7 7Z" fill="#fff" />
      </svg>
    ),
  },
  {
    name: "Excel",
    stack: true,
    art: (
      <svg viewBox="0 0 32 32" className="size-8" aria-hidden>
        <rect x="1" y="2" width="22" height="28" rx="4" fill="#e4f4dc" stroke="#4c9c3c" strokeWidth="2" />
        <rect x="12" y="12" width="19" height="18" fill="#f6fcf2" stroke="#5ca84c" />
        <path d="M14 17h15M14 21h15M14 25h15M19 14v15M25 14v15" stroke="#5ca84c" strokeWidth="2" />
        <path d="M6 6L15 20M16 6L5 20" stroke="#1c5c24" strokeWidth="4" />
      </svg>
    ),
  },
  {
    name: "Notepad",
    art: (
      <svg viewBox="0 0 32 32" className="size-8" aria-hidden>
        <path d="M10 3L30 5L24 30L2 26Z" fill="#a8dce4" stroke="#5c8c98" />
        <path d="M9 6L26 8L20 27L4 24Z" fill="#7cc4d0" />
        <path d="M12 2v4M16 2v4M20 3v4M24 3v4M28 4v4" stroke="#e8f0f0" />
        <path d="M28 6L30 28L24 30Z" fill="#d8e8e8" />
      </svg>
    ),
  },
  { name: "Lens", art: <Lens /> },
  {
    name: "Exceed",
    hot: true,
    stack: true,
    art: (
      <svg viewBox="0 0 32 32" className="size-8" aria-hidden>
        <path d="M28 2L4 30" stroke="#fff" strokeWidth="4" />
        <path d="M28 2L4 30" stroke="#500850" strokeWidth="2" />
        <path d="M4 2L28 30" stroke="#fff" strokeWidth="8" />
        <path d="M4 2L28 30" stroke="#780868" strokeWidth="5" />
      </svg>
    ),
  },
  { name: "Lens viewer", art: <Lens /> },
];

function Taskbar() {
  return (
    <footer className="flex h-10 shrink-0 items-center border-t border-[#8890a0] bg-gradient-to-r from-[#16263c] via-[#1c3a66] to-[#1b2b40] text-white">
      <button aria-label="Start" className="mx-[8px] shrink-0">
        <svg viewBox="0 0 38 38" className="size-[38px]" aria-hidden>
          <defs>
            <radialGradient id="orb" cx="50%" cy="85%" r="80%">
              <stop offset="0" stopColor="#48d8f8" />
              <stop offset="0.500" stopColor="#1c6ca8" />
              <stop offset="1" stopColor="#8ca8bc" />
            </radialGradient>
          </defs>
          <circle cx="19" cy="19" r="18" fill="url(#orb)" stroke="#0c2844" strokeWidth="1.500" />
          <path d="M11 11Q15 8 19 11L17 18Q13 16 9 18Z" fill="#f06428" />
          <path d="M20 12Q25 14 29 11L27 18Q22 21 18 18Z" fill="#8cc83c" />
          <path d="M9 20Q13 17 17 20L15 27Q11 25 7 27Z" fill="#3c9ce8" />
          <path d="M18 20Q22 23 26 20L24 27Q20 30 16 27Z" fill="#fccc28" />
        </svg>
      </button>
      <div className="ml-[6px] flex gap-1">
        {APPS.map((app) => (
          <div
            key={app.name}
            className={`flex h-[38px] w-[58px] ${app.stack ? "rounded-r-[3px] border-r border-[#8894a8]" : ""} ${app.hot ? "pr-[6px]" : app.stack ? "pr-[3px]" : ""}`}
          >
            <button
              aria-label={app.name}
              className={`flex flex-1 items-center justify-center rounded-[3px] border ${
                app.hot
                  ? "border-[#fce8a8] bg-gradient-to-br from-[#f8d890] to-[#e89c1c]"
                  : "border-[#8894a8] bg-gradient-to-br from-[#7c8898] via-[#3c4c64] to-[#34486a]"
              }`}
            >
              {app.art}
            </button>
          </div>
        ))}
      </div>
      <div className="mr-[2px] ml-auto flex items-center gap-2">
        <svg viewBox="0 0 16 14" className="h-[14px] w-4" aria-hidden>
          <rect x="0.500" y="5.500" width="15" height="8" rx="1" fill="#d0d0cc" stroke="#808080" />
          <path d="M2 8h12M2 10h12M4 12h8" stroke="#606060" strokeDasharray="1 1" />
          <path d="M4 5q0-3 4-2t6-2" fill="none" stroke="#a0a8a8" />
        </svg>
        <svg viewBox="0 0 16 16" className="size-4" aria-hidden>
          <circle cx="8" cy="8" r="7" fill="#1428b8" stroke="#c8d0f0" />
          <path d="M5.500 6q0-2.500 2.500-2.500t2.500 2.200q0 1.300-1.500 2T8 9.500M8 11v2" fill="none" stroke="#fff" strokeWidth="1.600" />
        </svg>
        <svg viewBox="0 0 10 18" className="mr-px h-[18px] w-[10px]" aria-hidden>
          <path d="M3.500 1.500h5v3h-5zM1.500 3.500h5v3h-5z" fill="#1c3050" stroke="#fff" />
          <path d="M2 14h6l-3 3z" fill="#fff" />
        </svg>
        <svg viewBox="0 0 8 4" className="mr-1 h-1 w-2" aria-hidden>
          <path d="M0 4h8l-4-4z" fill="#fff" />
        </svg>
        <svg viewBox="0 0 16 16" className="size-4" aria-hidden>
          <path d="M2 1v14" stroke="#fff" strokeWidth="1.500" />
          <path d="M3 2q4-1 5 1t5 0v7H3z" fill="#fff" />
          <circle cx="11" cy="11" r="4.500" fill="#d82818" />
          <path d="M9 9l4 4M13 9l-4 4" stroke="#fff" strokeWidth="1.500" />
        </svg>
        <svg viewBox="0 0 16 16" className="size-4" fill="none" stroke="#fff" aria-hidden>
          <path d="M5.500 4.500h9v8h-9zM7 15h6M10 13v2" strokeWidth="1.500" />
          <path d="M2.500 1v5M1 3h4v3H1zM2.500 6v6h3" />
        </svg>
        <svg viewBox="0 0 16 16" className="size-4" fill="none" stroke="#fff" aria-hidden>
          <path d="M1 6h3l4-4v12l-4-4H1z" fill="#fff" />
          <path d="M10 6q1.500 2 0 4M12 4q3 4 0 8M14 2.500q4 5.500 0 11" />
        </svg>
        <div className={`ml-[10px] mr-px w-[56px] text-center text-[13px] leading-[18px] whitespace-nowrap ${SANS}`}>
          <p>22:41</p>
          <p>2022/2/7</p>
        </div>
        <button aria-label="Show desktop" className="h-[38px] w-[13px] border border-[#8894a8] bg-gradient-to-b from-[#6c7888] to-[#28384c]" />
      </div>
    </footer>
  );
}

export default function App() {
  return (
    <div className="relative flex h-screen flex-col overflow-hidden bg-[#1d3e70] text-black">
      <TitleBar />
      <div className="mr-[7px] flex min-h-0 flex-1 flex-col border-r border-[#9cb0d0]">
        <Header />
        <main className="flex min-h-0 flex-1 bg-black">
          <Sidebar />
          <div className="min-w-0 flex-1 bg-black">
            <Board />
          </div>
          <RightPanel />
        </main>
        <CommandBar />
        <StatusBar />
      </div>
      <div className="mt-px mb-px h-[6px] shrink-0 border-y border-[#9cb0d0]" />
      <HistogramPopup />
      <MeasurePopup />
      <Taskbar />
    </div>
  );
}
